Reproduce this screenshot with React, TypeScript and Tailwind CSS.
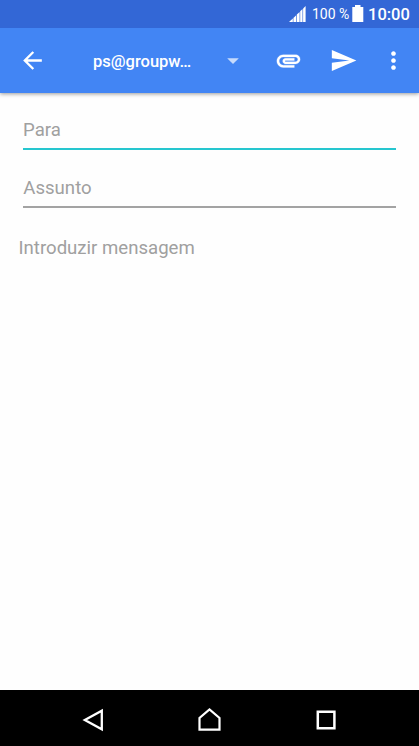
function SignalIcon() {
  return (
    <svg className="h-[16px] w-[17px]" viewBox="0 0 17 16" fill="#fff">
      <path d="M0 16L3.800 12.400V16z" />
      <path d="M4.400 11.900l2.800-2.700V16H4.400z" />
      <path d="M7.800 8.600l2.800-2.700V16H7.800z" />
      <path d="M11.200 5.300L13.500 3.100V16h-2.300z" />
      <path d="M14.100 2.500L16.600 0V16h-2.500z" />
    </svg>
  )
}

function BatteryIcon() {
  return (
    <svg className="mb-px h-[17px] w-[12px]" viewBox="0 0 12 17" fill="#fff">
      <path d="M3 0h5.500v2H11.300v15H.3V2H3z" />
    </svg>
  )
}

function StatusBar() {
  return (
    <div className="relative z-10 flex h-7 items-center bg-[#3367d6] pl-[289px] text-white">
      <SignalIcon />
      <span className="ml-[6px] w-[40px] whitespace-nowrap text-[14px] leading-none">100 %</span>
      <BatteryIcon />
      <span className="ml-[4px] whitespace-nowrap pt-0.5 text-[16.5px] font-medium leading-none">10:00</span>
    </div>
  )
}

function AppBar() {
  return (
    <header className="relative flex h-[65px] items-center bg-[#4285f4] pl-[18px] text-white shadow-[0_1px_4px_rgba(0,0,0,0.4)]">
      <svg className="size-[29px] shrink-0" viewBox="-0.43 -0.43 24.86 24.86" fill="currentColor">
        <path d="M20 11H7.830l5.590-5.590L12 4l-8 8 8 8 1.410-1.410L7.830 13H20v-2z" />
      </svg>
      <div className="ml-[46px] w-[126px] pt-[2px] text-[16.5px] font-medium leading-5">ps@groupw…</div>
      <svg className="h-[29px] w-7 shrink-0" viewBox="0 -0.43 24 24.86" fill="#fff" fillOpacity="0.7">
        <path d="M7 10l5 5 5-5z" />
      </svg>
      <svg
        className="ml-[27px] size-[29px] shrink-0"
        viewBox="-0.43 -0.43 24.86 24.86"
        fill="currentColor"
        stroke="currentColor"
        strokeWidth="0.2"
      >
        <path d="M2 12.500C2 9.460 4.460 7 7.500 7H18c2.210 0 4 1.790 4 4s-1.790 4-4 4H9.500C8.120 15 7 13.880 7 12.500S8.120 10 9.500 10H17v2H9.410c-.55 0-.55 1 0 1H18c1.100 0 2-.9 2-2s-.9-2-2-2H7.500C5.570 9 4 10.570 4 12.500S5.570 16 7.500 16H17v2H7.500C4.460 18 2 15.540 2 12.500z" />
      </svg>
      <svg className="ml-[26px] size-[29px] shrink-0" viewBox="-0.43 -0.43 24.86 24.86" fill="currentColor">
        <path d="M2.010 21L23 12 2.010 3 2 10l15 2-15 2z" />
      </svg>
      <svg className="ml-[21px] size-[29px] shrink-0" viewBox="-0.43 -0.43 24.86 24.86" fill="currentColor">
        <path d="M12 8c1.100 0 2-.9 2-2s-.9-2-2-2-2 .9-2 2 .9 2 2 2zm0 2c-1.100 0-2 .9-2 2s.9 2 2 2 2-.9 2-2-.9-2-2-2zm0 6c-1.100 0-2 .9-2 2s.9 2 2 2 2-.9 2-2-.9-2-2-2z" />
      </svg>
    </header>
  )
}

function NavBar() {
  return (
    <nav className="flex h-14 items-center bg-black pl-[81px] pt-1">
      <svg className="h-6 w-6" viewBox="0 0 24 24" fill="none" stroke="#fff" strokeWidth="2.300">
        <path d="M3.800 12L20.800 2.700v18.600z" />
      </svg>
      <svg className="ml-[92px] h-6 w-6" viewBox="0 0 24 24" fill="none" stroke="#fff" strokeWidth="2.200">
        <path d="M2.500 21.700V10L12.500 1.500 22.500 10v11.700z" />
      </svg>
      <svg className="ml-[93px] h-6 w-6" viewBox="0 0 24 24" fill="none" stroke="#fff" strokeWidth="2.500">
        <path d="M3.800 3.800h16.600v16.400h-16.600z" />
      </svg>
    </nav>
  )
}

export default function App() {
  return (
    <div className="flex h-[746px] w-[419px] flex-col overflow-hidden bg-white font-['Roboto',sans-serif]">
      <StatusBar />
      <AppBar />
      <main className="flex-1 bg-[#fefefe] pt-[25px] text-[18.6px] leading-6 text-[#a0a0a0]">
        <div className="mx-[23px] h-[32px] border-b-2 border-[#26c6cf]">Para</div>
        <div className="mx-[23px] mt-[26px] h-[32px] border-b-2 border-[#a3a3a3] pl-[0.3px]">Assunto</div>
        <div className="ml-[18.500px] mt-[28px]">Introduzir mensagem</div>
      </main>
      <NavBar />
    </div>
  )
}
